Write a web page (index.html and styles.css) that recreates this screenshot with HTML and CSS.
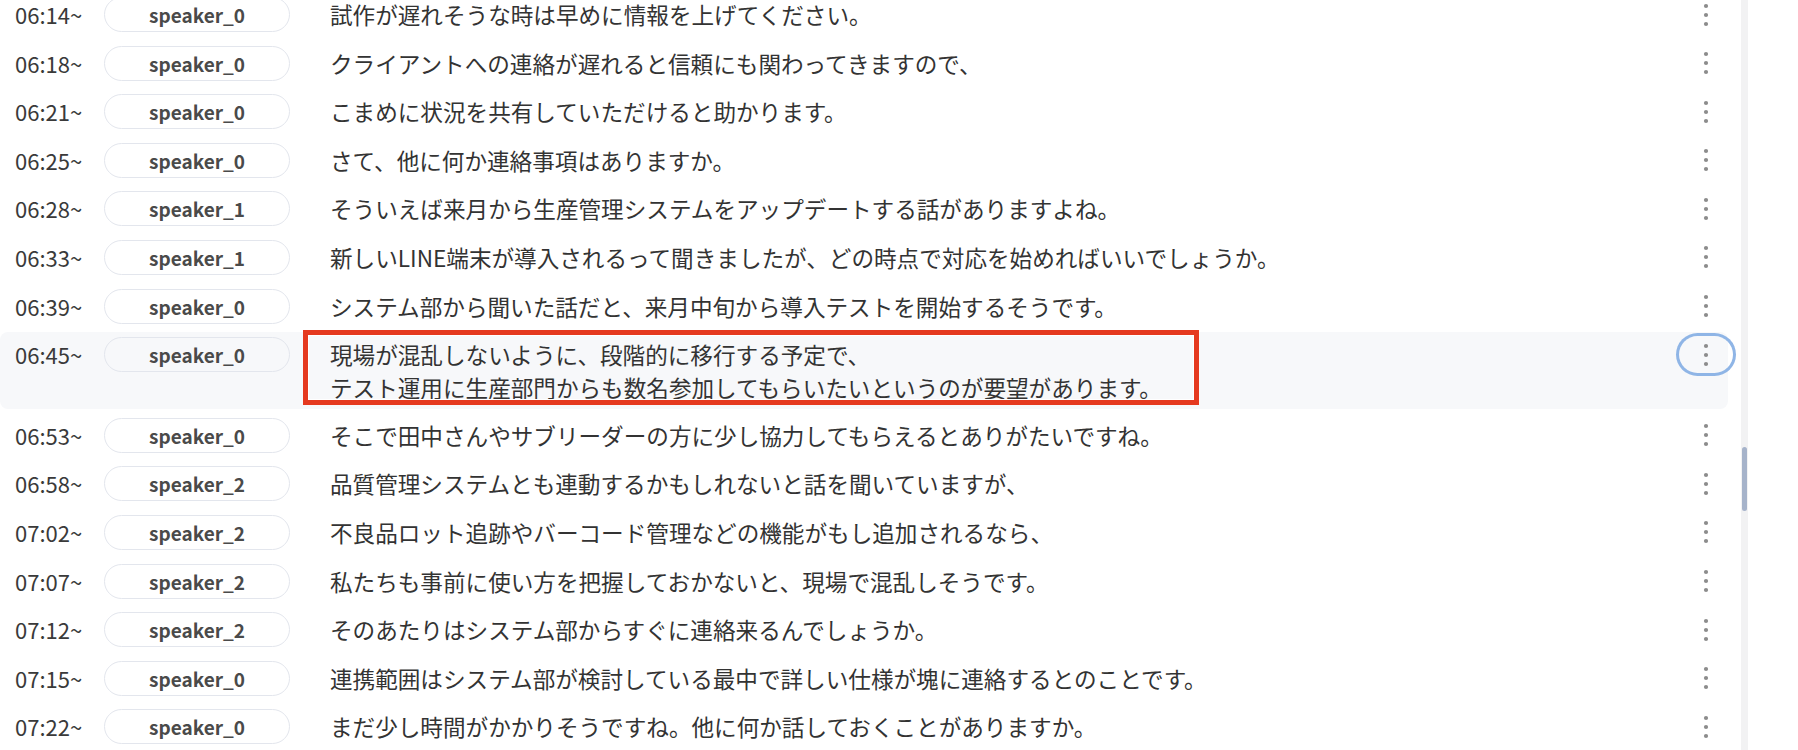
FILE: index.html
```html
<!DOCTYPE html>
<html lang="ja">
<head>
<meta charset="utf-8">
<title>Transcript</title>
<link rel="stylesheet" href="styles.css">
</head>
<body>
<div class="viewport">
  <div class="list">
    <div class="row"><div class="time">06:14~</div><div class="pill">speaker_0</div><div class="text">試作が遅れそうな時は早めに情報を上げてください。</div><button class="more"><svg width="6" height="24" viewBox="0 0 6 24"><circle cx="3" cy="3" r="2.1"/><circle cx="3" cy="12" r="2.1"/><circle cx="3" cy="21" r="2.1"/></svg></button></div>
    <div class="row"><div class="time">06:18~</div><div class="pill">speaker_0</div><div class="text">クライアントへの連絡が遅れると信頼にも関わってきますので、</div><button class="more"><svg width="6" height="24" viewBox="0 0 6 24"><circle cx="3" cy="3" r="2.1"/><circle cx="3" cy="12" r="2.1"/><circle cx="3" cy="21" r="2.1"/></svg></button></div>
    <div class="row"><div class="time">06:21~</div><div class="pill">speaker_0</div><div class="text">こまめに状況を共有していただけると助かります。</div><button class="more"><svg width="6" height="24" viewBox="0 0 6 24"><circle cx="3" cy="3" r="2.1"/><circle cx="3" cy="12" r="2.1"/><circle cx="3" cy="21" r="2.1"/></svg></button></div>
    <div class="row"><div class="time">06:25~</div><div class="pill">speaker_0</div><div class="text">さて、他に何か連絡事項はありますか。</div><button class="more"><svg width="6" height="24" viewBox="0 0 6 24"><circle cx="3" cy="3" r="2.1"/><circle cx="3" cy="12" r="2.1"/><circle cx="3" cy="21" r="2.1"/></svg></button></div>
    <div class="row"><div class="time">06:28~</div><div class="pill">speaker_1</div><div class="text">そういえば来月から生産管理システムをアップデートする話がありますよね。</div><button class="more"><svg width="6" height="24" viewBox="0 0 6 24"><circle cx="3" cy="3" r="2.1"/><circle cx="3" cy="12" r="2.1"/><circle cx="3" cy="21" r="2.1"/></svg></button></div>
    <div class="row"><div class="time">06:33~</div><div class="pill">speaker_1</div><div class="text">新しいLINE端末が導入されるって聞きましたが、どの時点で対応を始めればいいでしょうか。</div><button class="more"><svg width="6" height="24" viewBox="0 0 6 24"><circle cx="3" cy="3" r="2.1"/><circle cx="3" cy="12" r="2.1"/><circle cx="3" cy="21" r="2.1"/></svg></button></div>
    <div class="row"><div class="time">06:39~</div><div class="pill">speaker_0</div><div class="text">システム部から聞いた話だと、来月中旬から導入テストを開始するそうです。</div><button class="more"><svg width="6" height="24" viewBox="0 0 6 24"><circle cx="3" cy="3" r="2.1"/><circle cx="3" cy="12" r="2.1"/><circle cx="3" cy="21" r="2.1"/></svg></button></div>
    <div class="row active"><div class="time">06:45~</div><div class="pill">speaker_0</div><div class="text">現場が混乱しないように、段階的に移行する予定で、<br>テスト運用に生産部門からも数名参加してもらいたいというのが要望があります。</div><button class="more focused"><svg width="6" height="24" viewBox="0 0 6 24"><circle cx="3" cy="3" r="2.1"/><circle cx="3" cy="12" r="2.1"/><circle cx="3" cy="21" r="2.1"/></svg></button><div class="mark"></div></div>
    <div class="row"><div class="time">06:53~</div><div class="pill">speaker_0</div><div class="text">そこで田中さんやサブリーダーの方に少し協力してもらえるとありがたいですね。</div><button class="more"><svg width="6" height="24" viewBox="0 0 6 24"><circle cx="3" cy="3" r="2.1"/><circle cx="3" cy="12" r="2.1"/><circle cx="3" cy="21" r="2.1"/></svg></button></div>
    <div class="row"><div class="time">06:58~</div><div class="pill">speaker_2</div><div class="text">品質管理システムとも連動するかもしれないと話を聞いていますが、</div><button class="more"><svg width="6" height="24" viewBox="0 0 6 24"><circle cx="3" cy="3" r="2.1"/><circle cx="3" cy="12" r="2.1"/><circle cx="3" cy="21" r="2.1"/></svg></button></div>
    <div class="row"><div class="time">07:02~</div><div class="pill">speaker_2</div><div class="text">不良品ロット追跡やバーコード管理などの機能がもし追加されるなら、</div><button class="more"><svg width="6" height="24" viewBox="0 0 6 24"><circle cx="3" cy="3" r="2.1"/><circle cx="3" cy="12" r="2.1"/><circle cx="3" cy="21" r="2.1"/></svg></button></div>
    <div class="row"><div class="time">07:07~</div><div class="pill">speaker_2</div><div class="text">私たちも事前に使い方を把握しておかないと、現場で混乱しそうです。</div><button class="more"><svg width="6" height="24" viewBox="0 0 6 24"><circle cx="3" cy="3" r="2.1"/><circle cx="3" cy="12" r="2.1"/><circle cx="3" cy="21" r="2.1"/></svg></button></div>
    <div class="row"><div class="time">07:12~</div><div class="pill">speaker_2</div><div class="text">そのあたりはシステム部からすぐに連絡来るんでしょうか。</div><button class="more"><svg width="6" height="24" viewBox="0 0 6 24"><circle cx="3" cy="3" r="2.1"/><circle cx="3" cy="12" r="2.1"/><circle cx="3" cy="21" r="2.1"/></svg></button></div>
    <div class="row"><div class="time">07:15~</div><div class="pill">speaker_0</div><div class="text">連携範囲はシステム部が検討している最中で詳しい仕様が塊に連絡するとのことです。</div><button class="more"><svg width="6" height="24" viewBox="0 0 6 24"><circle cx="3" cy="3" r="2.1"/><circle cx="3" cy="12" r="2.1"/><circle cx="3" cy="21" r="2.1"/></svg></button></div>
    <div class="row"><div class="time">07:22~</div><div class="pill">speaker_0</div><div class="text">まだ少し時間がかかりそうですね。他に何か話しておくことがありますか。</div><button class="more"><svg width="6" height="24" viewBox="0 0 6 24"><circle cx="3" cy="3" r="2.1"/><circle cx="3" cy="12" r="2.1"/><circle cx="3" cy="21" r="2.1"/></svg></button></div>
  </div>
  <div class="scrollbar"><div class="thumb"></div></div>
</div>
</body>
</html>
```
FILE: styles.css
```css
html, body {
  margin: 0;
  padding: 0;
  height: 750px;
  overflow: hidden;
  background: #ffffff;
}

body {
  font-family: "Noto Sans CJK JP", "Noto Sans", sans-serif;
  color: #333333;
}

.viewport {
  display: flex;
  height: 750px;
  overflow: hidden;
}

.list {
  width: 1741px;
  margin-top: -8px;
  flex: none;
}

.row {
  position: relative;
  display: flex;
  align-items: flex-start;
  width: 1728px;
  box-sizing: border-box;
  padding: 5px 0;
  margin-bottom: 3.6px;
  border-radius: 8px;
}

.row.active {
  background: #f7f8fa;
}

.time {
  width: 104px;
  box-sizing: border-box;
  padding-left: 15px;
  flex: none;
  font-size: 22px;
  line-height: 35px;
  height: 35px;
  color: #3a3a3a;
}

.pill {
  width: 186px;
  height: 35px;
  box-sizing: border-box;
  flex: none;
  display: flex;
  align-items: center;
  justify-content: center;
  border: 1px solid #e3e6ed;
  border-radius: 18px;
  font-size: 19px;
  font-weight: 600;
  color: #4a4a4a;
}

.text {
  flex: 1;
  margin-left: 40px;
  padding-top: 1px;
  font-size: 22.6px;
  line-height: 33px;
  color: #333333;
  white-space: nowrap;
}

.more {
  flex: none;
  width: 54px;
  height: 37px;
  margin: -1px -5px -1px 0;
  padding: 0;
  border: none;
  background: transparent;
  display: flex;
  align-items: center;
  justify-content: center;
  border-radius: 19px;
}

.more svg {
  fill: #8c8c8c;
  display: block;
}

.more.focused {
  box-shadow: 0 0 0 3px #8fb5e6;
}

.mark {
  position: absolute;
  left: 303px;
  top: -2px;
  width: 896px;
  height: 75px;
  box-sizing: border-box;
  border: 5px solid #e5391f;
  box-shadow: inset 0 0 0 1px #ffffff;
  pointer-events: none;
}

.scrollbar {
  width: 7px;
  flex: none;
  background: #f2f2f3;
  padding-top: 447px;
  box-sizing: border-box;
}

.thumb {
  width: 5px;
  margin-left: 1px;
  height: 64px;
  border-radius: 3px;
  background: #a6b3ca;
}
```
